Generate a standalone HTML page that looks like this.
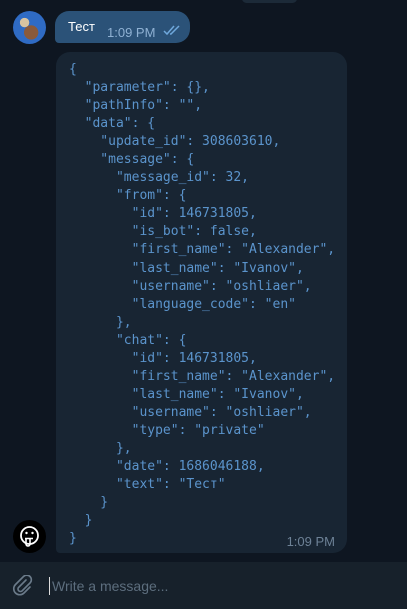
<!DOCTYPE html>
<html><head><meta charset="utf-8"><style>
html,body{margin:0;padding:0;width:407px;height:609px;overflow:hidden;background:#0e1621;font-family:"Liberation Sans",sans-serif;}
.abs{position:absolute}
.top{left:242px;top:-6px;width:55px;height:9px;border-radius:5px;background:#1c2a38}
.av{left:13px;top:11px;width:33px;height:33px;border-radius:50%;background:radial-gradient(circle at 55% 65%,#8a5a3a 0 25%,transparent 26%),radial-gradient(circle at 35% 35%,#d9c4a0 0 15%,transparent 16%),#2f6bc4}
.b1{left:55px;top:11px;width:135px;height:32px;background:#2b5278;border-radius:14px 14px 14px 4px;}
.b1 .t{position:absolute;left:13px;top:8px;color:#fff;font-size:13px}
.b1 .tm{position:absolute;left:52px;top:14px;color:#8fb1d3;font-size:13px}
.b2{left:56px;top:52px;width:291px;height:501px;background:#182533;border-radius:14px 14px 14px 4px}
pre{margin:0;position:absolute;left:13px;top:9px;font-family:"DejaVu Sans Mono",monospace;font-size:13px;line-height:18.04px;color:#5b94cc}
.tm2{right:12px;bottom:4px;color:#6d8196;font-size:13px}
.st{left:13px;top:520px;width:33px;height:33px;border-radius:50%;background:#000}
.inp{left:0;top:562px;width:407px;height:47px;background:#17212b}
.ph{left:52px;top:578px;color:#5d6e7e;font-size:14px}
.cur{left:49px;top:577px;width:1px;height:18px;background:#ddd}
</style></head><body>
<div class="abs top"></div>
<div class="abs av"></div>
<div class="abs b1"><span class="t">Тест</span><span class="tm">1:09 PM</span>
<svg style="position:absolute;left:108px;top:14px" width="18" height="11" viewBox="0 0 18 11"><path d="M1 6l3 3 7-8M7 9l1 0 8-8" stroke="#6fa8dc" stroke-width="1.5" fill="none"/></svg></div>
<div class="abs b2"><pre>{
  "parameter": {},
  "pathInfo": "",
  "data": {
    "update_id": 308603610,
    "message": {
      "message_id": 32,
      "from": {
        "id": 146731805,
        "is_bot": false,
        "first_name": "Alexander",
        "last_name": "Ivanov",
        "username": "oshliaer",
        "language_code": "en"
      },
      "chat": {
        "id": 146731805,
        "first_name": "Alexander",
        "last_name": "Ivanov",
        "username": "oshliaer",
        "type": "private"
      },
      "date": 1686046188,
      "text": "Тест"
    }
  }
}</pre><span class="abs tm2">1:09 PM</span></div>
<div class="abs st"><svg width="33" height="33" viewBox="0 0 33 33"><circle cx="16.5" cy="15.5" r="8.5" stroke="#fff" stroke-width="1.8" fill="none"/><circle cx="13.5" cy="13" r="1.2" fill="#fff"/><circle cx="19.5" cy="13" r="1.2" fill="#fff"/><path d="M12 18.5h8M13 19v5a2 2 0 0 0 4 0v-5" stroke="#fff" stroke-width="1.6" fill="none"/></svg></div>
<div class="abs inp"></div>
<svg class="abs" style="left:12px;top:575px" width="22" height="22" viewBox="0 0 22 22"><path d="M14 5l-7.5 7.5a2.5 2.5 0 0 0 3.5 3.5l8-8a4.5 4.5 0 0 0-6.5-6.5l-8 8a6 6 0 0 0 8.5 8.5l6-6" stroke="#6b7b8a" stroke-width="1.6" fill="none" stroke-linecap="round"/></svg>
<div class="abs cur"></div>
<div class="abs ph">Write a message...</div>
</body></html>
